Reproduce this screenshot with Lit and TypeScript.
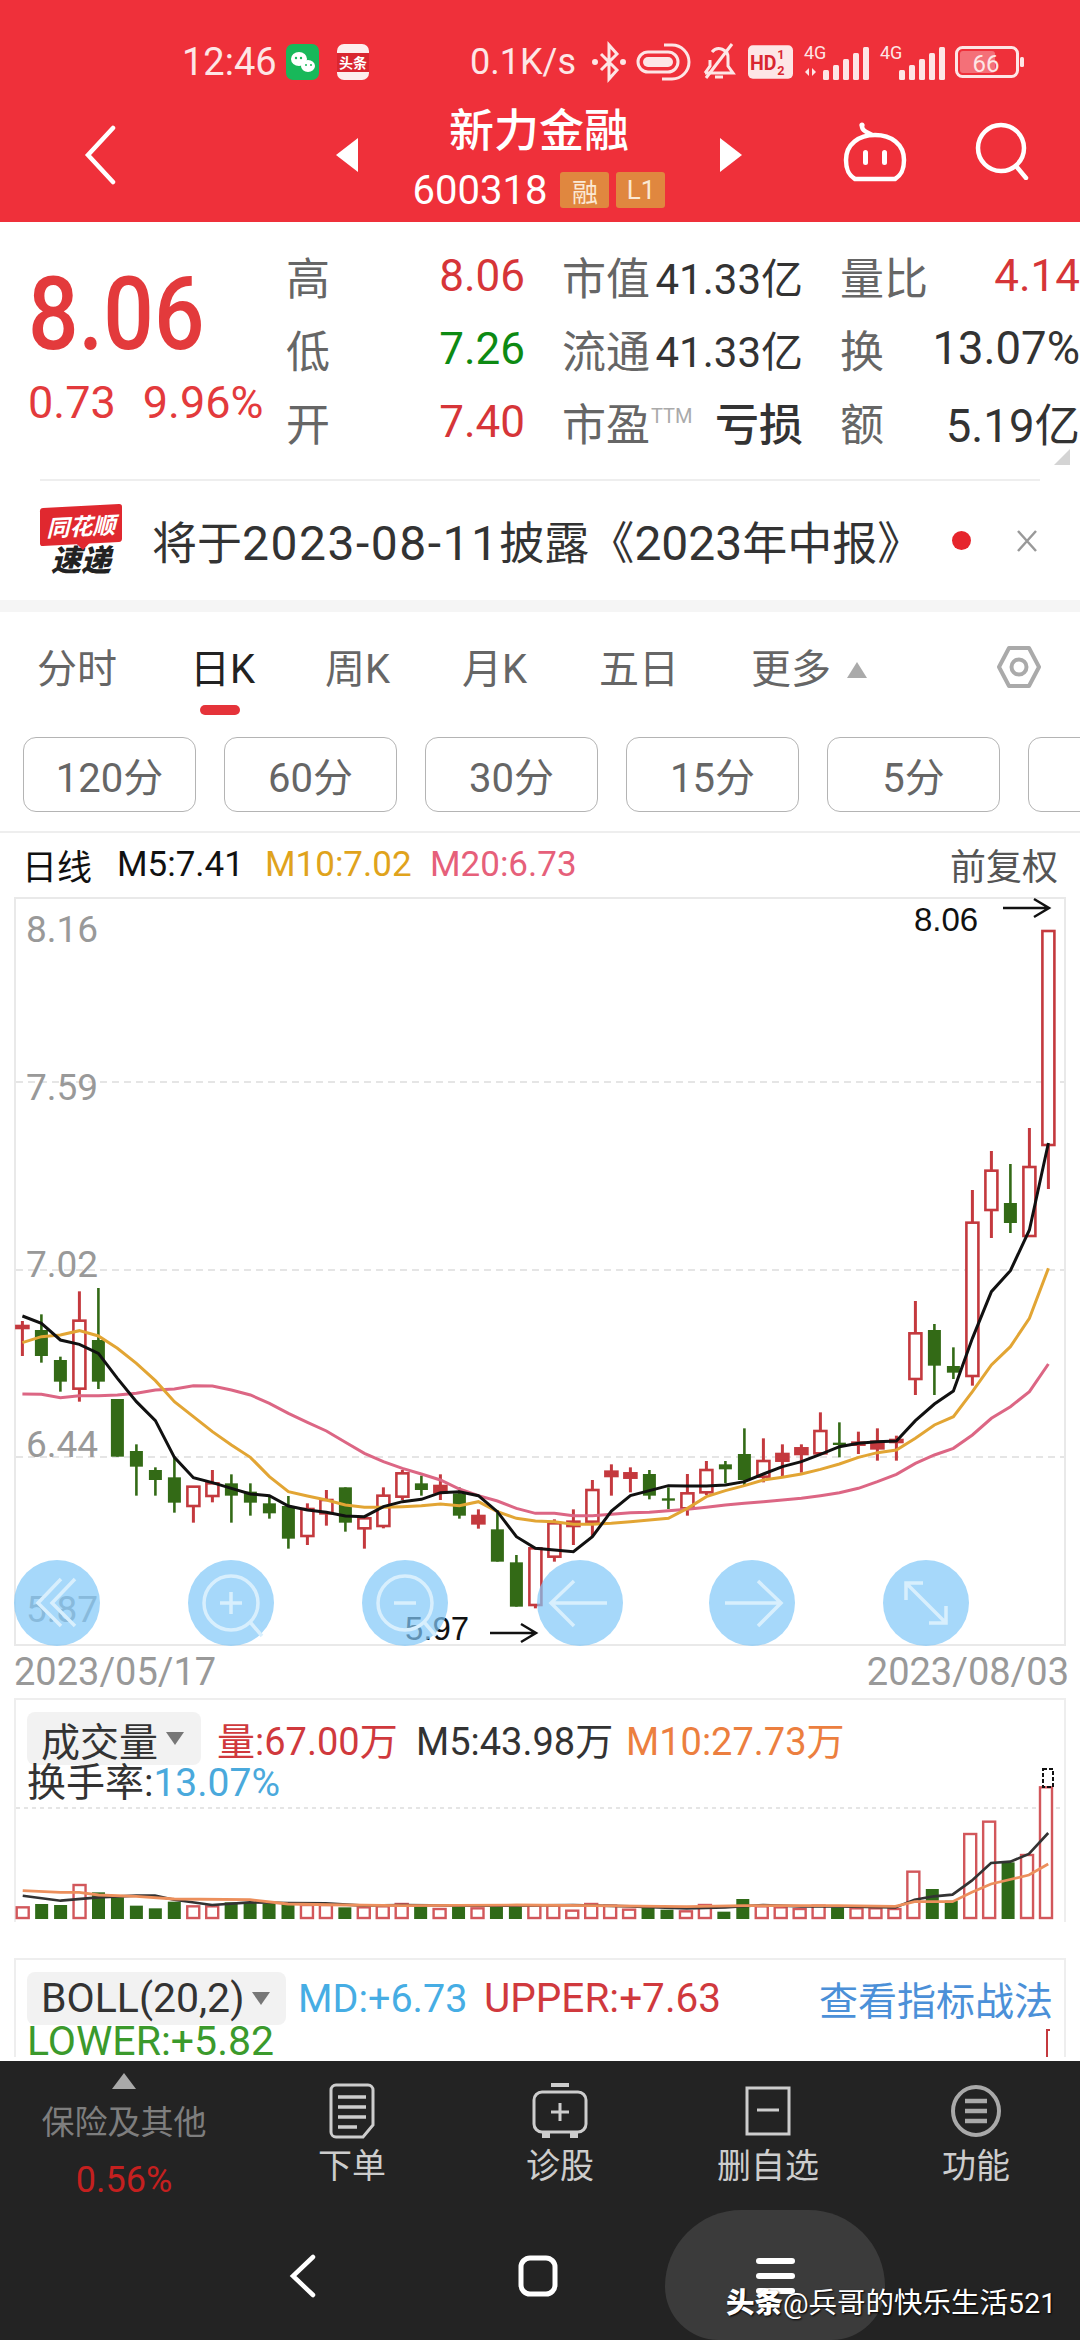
import { LitElement, html, css, svg } from "lit";
import { customElement } from "lit/decorators.js";

// candle data: [isRed, wickTop, bodyTop, bodyBottom, wickBottom], y as measured on the chart crop
const CANDLES: number[][] = [
  [1, 213, 228, 234, 318], [0, 193, 240, 318, 338], [0, 320, 330, 395, 425], [1, 124, 212, 416, 455],
  [0, 114, 270, 395, 417], [0, 447, 447, 620, 620], [0, 583, 603, 650, 737], [0, 652, 660, 690, 737],
  [0, 620, 682, 758, 788], [1, 710, 710, 768, 818], [1, 660, 700, 738, 757], [0, 673, 700, 737, 818],
  [0, 700, 725, 758, 797], [0, 740, 760, 790, 806], [0, 738, 768, 866, 896], [1, 760, 777, 858, 885],
  [1, 720, 750, 790, 827], [0, 712, 712, 818, 845], [1, 805, 805, 835, 896], [1, 712, 737, 828, 835],
  [1, 660, 670, 740, 750], [0, 677, 700, 720, 737], [1, 673, 708, 727, 750], [0, 712, 730, 797, 806],
  [1, 778, 798, 820, 836], [0, 780, 838, 935, 935], [0, 915, 937, 1070, 1070], [1, 895, 895, 1065, 1075],
  [1, 808, 820, 920, 935], [1, 778, 815, 828, 885], [1, 690, 720, 815, 860], [1, 643, 665, 678, 737],
  [1, 652, 670, 683, 727], [0, 660, 672, 737, 748], [0, 712, 745, 752, 777], [1, 672, 730, 775, 797],
  [1, 633, 660, 727, 735], [0, 633, 643, 658, 700], [0, 535, 612, 690, 705], [1, 565, 633, 680, 697],
  [1, 583, 612, 632, 678], [1, 583, 595, 612, 668], [1, 487, 543, 610, 615], [0, 517, 578, 585, 622],
  [1, 545, 578, 582, 612], [1, 535, 575, 595, 632], [1, 557, 570, 575, 632], [1, 153, 250, 387, 435],
  [0, 222, 240, 347, 435], [0, 292, 348, 368, 387], [1, -180, -82, 378, 407], [1, -297, -238, -120, -36],
  [0, -258, -141, -81, -51], [1, -366, -249, -42, -42], [1, -957, -957, -315, -183],
];
const MA5 = [198, 220, 270, 283, 310, 385, 455, 512, 622, 683, 698, 715, 732, 737, 768, 780, 787, 798, 800, 770, 755, 748, 728, 725, 737, 785, 860, 895, 900, 905, 860, 783, 737, 722, 707, 708, 708, 705, 695, 672, 650, 635, 613, 590, 580, 575, 573, 512, 462, 423, 265, 125, 62, -60, -321];
const MA10 = [278, 260, 255, 242, 258, 295, 340, 392, 455, 500, 545, 585, 622, 680, 725, 738, 750, 765, 772, 772, 770, 767, 762, 767, 755, 785, 805, 813, 815, 823, 823, 820, 815, 810, 805, 775, 740, 722, 707, 690, 682, 672, 658, 642, 622, 608, 600, 565, 525, 500, 425, 345, 290, 205, 55];
const MA20 = [432, 433, 443, 437, 437, 435, 430, 420, 417, 407, 408, 420, 435, 460, 490, 517, 543, 577, 610, 635, 655, 672, 690, 717, 737, 753, 775, 790, 790, 797, 797, 793, 788, 787, 782, 778, 772, 765, 760, 755, 750, 745, 737, 728, 715, 695, 673, 640, 615, 595, 555, 505, 470, 425, 342];

// volume: [isRed, top]
const VOLS: number[][] = [
  [1, 745], [0, 735], [0, 738], [1, 678], [0, 700], [0, 715], [0, 740], [0, 748], [0, 728], [1, 742], [1, 742],
  [0, 730], [0, 730], [0, 735], [0, 735], [1, 738], [1, 738], [0, 745], [1, 745], [1, 742], [1, 735], [0, 738],
  [1, 750], [0, 742], [1, 748], [0, 742], [0, 742], [1, 740], [1, 740], [1, 755], [1, 735], [1, 740], [1, 752],
  [0, 745], [0, 752], [1, 757], [1, 738], [0, 758], [0, 720], [1, 742], [1, 745], [1, 750], [1, 740], [0, 745],
  [1, 748], [1, 748], [1, 750], [1, 638], [0, 690], [0, 725], [1, 525], [1, 488], [0, 610], [1, 588], [1, 385],
];
const VOL_MA5 = [[33, 710], [88, 725], [143, 715], [198, 710], [225, 710], [253, 722], [308, 738], [363, 730], [418, 732], [473, 733], [528, 740], [584, 738], [667, 740], [750, 740], [832, 738], [915, 742], [997, 748], [1053, 745], [1108, 738], [1163, 742], [1218, 742], [1300, 745], [1328, 722], [1356, 712], [1383, 707], [1411, 665], [1439, 612], [1467, 608], [1494, 585], [1522, 522]];
const VOL_MA10 = [[33, 695], [88, 700], [115, 700], [143, 708], [198, 712], [253, 720], [363, 722], [418, 735], [501, 738], [584, 740], [750, 738], [860, 740], [997, 743], [1080, 740], [1218, 740], [1300, 742], [1328, 728], [1383, 728], [1411, 700], [1439, 675], [1494, 648], [1522, 615]];

const candleX = (i: number) => 22.4 + i * 19;
const py = (v: number) => 1250 + v / 3;
const maPoints = (a: number[]) => a.map((v, i) => `${candleX(i)},${py(v)}`).join(" ");
const volY = (v: number) => 1660 + v / 3;
const volPoints = (a: number[][]) => a.map(([x, y]) => `${x / 1.452},${volY(y)}`).join(" ");

const RED = "#c4393e";
const GREEN = "#336a16";

@customElement("app-root")
export class AppRoot extends LitElement {
  static styles = css`
    :host {
      display: block;
      width: 1080px;
      height: 2340px;
      overflow: hidden;
      background: #fff;
      position: relative;
      font-family: Roboto, "Noto Sans CJK SC", sans-serif;
    }
    .page { display: flex; flex-direction: column; height: 2340px; }

    .header { height: 222px; background: #ef303a; color: #fff; flex: none; }
    .status { display: flex; align-items: center; justify-content: space-between; height: 60px; padding: 32px 55px 0 182px; color: #fde6e6; }
    .status-left, .status-right { display: flex; align-items: center; }
    .time { font-size: 38px; margin-right: 9px; }
    .speed { font-size: 36px; margin-right: 6px; }
    .status svg { display: block; flex: none; overflow: visible; }
    .status-left svg + svg { margin-left: 18px; }
    .status-right svg { margin-left: 10px; }
    .nav { display: grid; grid-template-columns: 336px 406px 1fr; height: 130px; }
    .back { padding: 33px 0 0 84px; }
    .mid { display: flex; justify-content: space-between; align-items: flex-start; padding-top: 46px; }
    .mid-text { display: flex; flex-direction: column; align-items: center; margin-top: -36px; }
    .title { font-size: 45px; font-weight: 500; line-height: 60px; }
    .sub { display: flex; align-items: center; height: 46px; margin-top: 5px; font-size: 40px; gap: 7px; }
    .code { margin-right: 6px; }
    .tag { width: 49px; height: 36px; background: #e0873f; color: #fbe9d4; border-radius: 3px; font-size: 26px; display: flex; align-items: center; justify-content: center; }
    .nav-right { display: flex; gap: 68px; padding: 30px 0 0 101px; align-items: flex-start; }

    .quote { height: 257px; display: flex; flex: none; padding-top: 17px; box-sizing: border-box; position: relative; }
    .price { width: 286px; flex: none; padding: 27px 0 0 28px; box-sizing: border-box; color: #e33a3c; }
    .price-main { font-size: 89px; line-height: 84px; font-weight: 500; transform: scaleY(1.15); transform-origin: top left; }
    .price-sub { font-size: 45px; line-height: 50px; margin-top: 28px; display: flex; gap: 27px; white-space: nowrap; }
    .stats { display: grid; grid-template-columns: 239px 241px 240px; grid-auto-rows: 73px; column-gap: 37px; align-items: center; }
    .cell { display: flex; justify-content: space-between; align-items: center; white-space: nowrap; }
    .lab { font-size: 44px; color: #666; }
    .val { font-size: 42px; color: #333; }
    .val.big { font-size: 45.5px; }
    .val.up { color: #d63538; font-size: 44px; }
    .val.down { color: #0d8a13; font-size: 44px; }
    .lab sup { font-size: 20px; color: #aaa; vertical-align: 18px; line-height: 0; margin-left: 1px; }
    .loss { font-size: 44px; color: #333; font-weight: 500; }
    .corner { position: absolute; right: 10px; bottom: 14px; width: 0; height: 0; border-left: 16px solid transparent; border-bottom: 16px solid #d4d4d4; }

    .notice-line { height: 2px; margin: 0 40px; background: #eee; flex: none; }
    .notice { height: 119px; display: flex; align-items: center; flex: none; padding-left: 40px; }
    .logo { width: 82px; flex: none; margin-right: 30px; }
    .logo-top { background: #e0282f; color: #fff; height: 38px; font-size: 23px; font-style: italic; font-weight: 700; display: flex; align-items: center; justify-content: center; border-radius: 3px; transform: skewY(-3deg); white-space: nowrap; position: relative; }
    .logo-top::after { content: ""; position: absolute; left: 36px; bottom: -6px; width: 0; height: 0; border-left: 7px solid transparent; border-right: 7px solid transparent; border-top: 7px solid #e0282f; }
    .logo-bottom { color: #222; font-size: 30px; line-height: 30px; font-weight: 900; font-style: italic; text-align: center; margin-top: 2px; }
    .notice-text { font-size: 45px; color: #333; white-space: nowrap; width: 800px; flex: none; }
    .notice-text span { font-size: 48px; }
    .notice-text .date { letter-spacing: 1.5px; }
    .dot { width: 19px; height: 19px; border-radius: 50%; background: #e6252c; flex: none; }
    .close { margin-left: 45px; flex: none; display: block; }
    .band { height: 12px; background: #f5f5f5; flex: none; }

    .tabs { height: 125px; position: relative; flex: none; display: flex; align-items: flex-start; padding: 33px 0 0 37px; font-size: 40px; color: #666; box-sizing: border-box; }
    .tab { width: 137px; flex: none; line-height: 50px; white-space: nowrap; }
    .tab.first { width: 153px; }
    .tab.wide { width: 152px; }
    .tab.active { color: #222; position: relative; width: 135px; }
    .tab.active::after { content: ""; position: absolute; left: 10px; top: 60px; width: 40px; height: 10px; border-radius: 5px; background: #e5333a; }
    .tab.more { display: flex; align-items: center; gap: 16px; width: 246px; }
    .more i { width: 0; height: 0; border-left: 10px solid transparent; border-right: 10px solid transparent; border-bottom: 16px solid #aaa; }
    .pills { display: flex; gap: 28px; padding-left: 23px; height: 75px; flex: none; overflow: hidden; }
    .pill { width: 173px; flex: none; box-sizing: border-box; border: 1.5px solid #b4b4b4; border-radius: 13px; font-size: 40px; color: #666; display: flex; align-items: center; justify-content: center; }
    .pills-line { height: 2px; background: #eee; margin-top: 19px; flex: none; }
    .legend { height: 62px; display: flex; align-items: center; flex: none; font-size: 35px; padding: 0 22px 2px 22px; white-space: nowrap; color: #111; }
    .legend .l1 { width: 95px; }
    .legend .l2 { width: 148px; }
    .legend .l3 { width: 165px; color: #e0a31c; }
    .legend .l4 { color: #e6607a; }
    .legend .l5 { margin-left: auto; color: #555; font-size: 36px; }

    .chart { position: relative; margin-left: 14px; width: 1052px; height: 749px; flex: none; box-sizing: border-box; border: 2px solid #e9e9e9; }
    .chart svg { position: absolute; left: -2px; top: -2px; display: block; overflow: visible; }
    .fab { position: absolute; top: 661px; width: 86px; height: 86px; border-radius: 50%; background: rgba(128, 200, 248, 0.7); }
    .fab svg { left: 0; top: 0; }
    .dates { height: 52px; display: flex; justify-content: space-between; align-items: center; padding: 0 11px 0 14px; font-size: 38px; color: #999; flex: none; }

    .panel { margin-left: 14px; width: 1052px; box-sizing: border-box; border: 2px solid #eee; border-bottom: none; flex: none; position: relative; }
    .vol { height: 224px; }
    .vol svg { position: absolute; left: -2px; top: -2px; display: block; }
    .row { display: flex; align-items: center; white-space: nowrap; font-size: 38px; position: relative; }
    .select { background: #f2f2f2; border-radius: 8px; height: 53px; display: flex; align-items: center; color: #333; font-size: 39px; padding-left: 14px; box-sizing: border-box; flex: none; }
    .select i { width: 0; height: 0; border-left: 9px solid transparent; border-right: 9px solid transparent; border-top: 13px solid #777; margin-left: 8px; }
    .vol-row { padding: 11px 0 0 11px; }
    .select.s1 { width: 174px; }
    .select.s2 { width: 259px; font-size: 41px; }
    .red { color: #d0393d; }
    .dark { color: #333; }
    .orange { color: #ec7f3f; }
    .v1 { margin-left: 16px; width: 199px; }
    .v2 { width: 210px; }
    .turn { padding-left: 11px; font-size: 39px; line-height: 34px; color: #333; position: relative; }
    .turn span { color: #4aa9dc; }
    .gap { height: 36px; flex: none; }
    .boll { height: 99px; }
    .boll-row { padding: 10px 0 0 11px; }
    .md { color: #46ade4; margin-left: 12px; width: 186px; font-size: 39.5px; }
    .up-band { color: #d0393d; font-size: 40.5px; }
    .link { margin-left: auto; margin-right: 11px; color: #4b90d8; font-size: 39px; }
    .lower { padding-left: 11px; font-size: 41px; line-height: 30px; color: #3b9a2c; }
    .tick { position: absolute; right: 14px; bottom: 0; width: 4px; height: 28px; border-left: 2px solid #c4393e; border-top: 2px solid #c4393e; box-sizing: border-box; }

    .bottom { position: absolute; left: 0; top: 2061px; width: 1080px; height: 279px; background: #232323; }
    .actions { display: grid; grid-template-columns: 248px repeat(4, 208px); height: 145px; }
    .ins { display: flex; flex-direction: column; align-items: center; padding-top: 12px; }
    .ins i { width: 0; height: 0; border-left: 12px solid transparent; border-right: 12px solid transparent; border-bottom: 16px solid #a9a9a9; }
    .ins-name { font-size: 33px; color: #7e7e7e; line-height: 44px; margin-top: 12px; }
    .ins-val { font-size: 36px; color: #c4201f; line-height: 40px; margin-top: 15px; }
    .act { display: flex; flex-direction: column; align-items: center; color: #cdcdcd; font-size: 34px; padding-top: 22px; }
    .act svg { display: block; height: 56px; }
    .act span { line-height: 44px; margin-top: 5px; }
    .sysnav { position: relative; height: 134px; }
    .sysnav svg { position: absolute; display: block; }
    .sn-back { left: 288px; top: 48px; }
    .sn-home { left: 518px; top: 49px; }
    .sn-menu { left: 755px; top: 50px; }
    .pill-bg { position: absolute; left: 665px; top: 4px; width: 220px; height: 130px; background: #3b3b3b; border-radius: 100px 100px 70px 70px; }
    .mark { position: absolute; left: 726px; top: 74px; font-size: 28.5px; color: #fff; white-space: nowrap; text-shadow: 1px 1px 2px #000; }
    .mark b { font-weight: 900; }
  `;

  private statusBar() {
    return html`
      <div class="status">
        <div class="status-left">
          <span class="time">12:46</span>
          <svg width="33" height="36" viewBox="0 0 33 36"><rect width="33" height="36" rx="7" fill="#18b85a"/><ellipse cx="13" cy="15" rx="8" ry="7" fill="#fff"/><ellipse cx="22" cy="22" rx="7" ry="6" fill="#fff"/><circle cx="10" cy="14" r="1.2" fill="#18b85a"/><circle cx="15" cy="14" r="1.2" fill="#18b85a"/><circle cx="20" cy="21" r="1" fill="#18b85a"/><circle cx="25" cy="21" r="1" fill="#18b85a"/></svg>
          <svg width="32" height="36" viewBox="0 0 32 36"><rect width="32" height="36" rx="7" fill="#fdeeee"/><rect y="9" width="32" height="19" fill="#d92630"/><text x="16" y="24" text-anchor="middle" font-size="14" font-weight="700" fill="#fff">头条</text></svg>
        </div>
        <div class="status-right">
          <span class="speed">0.1K/s</span>
          <svg width="34" height="40" viewBox="0 0 34 40" fill="none" stroke="#fde6e6" stroke-width="3"><path d="M9 12 L25 28 L17 37 V3 L25 12 L9 28"/><circle cx="3" cy="20" r="1.5" fill="#fde6e6"/><circle cx="31" cy="20" r="1.5" fill="#fde6e6"/></svg>
          <svg width="54" height="38" viewBox="0 0 54 38" fill="none" stroke="#fde6e6" stroke-width="3"><rect x="2" y="9" width="40" height="20" rx="10"/><rect x="7" y="14" width="30" height="10" rx="5" fill="#fde6e6" stroke="none"/><path d="M28 2 H36 A17 17 0 0 1 36 36 H26"/></svg>
          <svg width="38" height="40" viewBox="0 0 38 40" fill="none" stroke="#fde6e6" stroke-width="3"><path d="M5 31 H33 L28 24 V16 A9 9 0 0 0 12 10 M10 18 V24 L5 31"/><path d="M15 35 H23"/><path d="M6 36 L32 2"/></svg>
          <svg width="45" height="34" viewBox="0 0 46 34"><rect width="46" height="34" rx="5" fill="#fde6e6"/><text x="2" y="25" font-size="20" font-weight="700" fill="#d92630">HD</text><text x="30" y="14" font-size="13" font-weight="700" fill="#d92630">1</text><text x="30" y="30" font-size="13" font-weight="700" fill="#d92630">2</text></svg>
          ${this.signal(true)}
          ${this.signal(false)}
          <svg width="70" height="32" viewBox="0 0 70 32"><rect x="1.5" y="1.5" width="61" height="29" rx="6" fill="none" stroke="#fde6e6" stroke-width="3"/><rect x="5" y="5" width="35" height="22" rx="3" fill="#f47078"/><rect x="65" y="11" width="4" height="10" rx="1.5" fill="#fde6e6"/><text x="31" y="26" text-anchor="middle" font-size="24" fill="#fde6e6">66</text></svg>
        </div>
      </div>
    `;
  }

  private signal(arrows: boolean) {
    const bars = [10, 15, 21, 27, 33];
    return html`<svg width="66" height="40" viewBox="0 0 66 40">
      <text x="1" y="17" font-size="18" fill="#fde6e6">4G</text>
      ${arrows ? svg`<path d="M2 30 l4 -4 v8 z M9 26 l4 4 -4 4 z" fill="#fde6e6"/>` : ""}
      ${bars.map((h, i) => svg`<rect x=${20 + i * 10} y=${38 - h} width="6" height=${h} rx="1.5" fill="#fde6e6"/>`)}
    </svg>`;
  }

  private navBar() {
    return html`
      <div class="nav">
        <div class="back">
          <svg width="32" height="60" viewBox="0 0 32 60" fill="none" stroke="#fff" stroke-width="4.5" stroke-linecap="round"><path d="M29 3 L4 30 L29 57"/></svg>
        </div>
        <div class="mid">
          <svg width="22" height="34" viewBox="0 0 22 34"><path d="M22 0 V34 L0 17 z" fill="#fff"/></svg>
          <div class="mid-text">
            <div class="title">新力金融</div>
            <div class="sub"><span class="code">600318</span><span class="tag">融</span><span class="tag">L1</span></div>
          </div>
          <svg width="22" height="34" viewBox="0 0 22 34"><path d="M0 0 V34 L22 17 z" fill="#fff"/></svg>
        </div>
        <div class="nav-right">
          <svg width="64" height="60" viewBox="0 0 64 60" fill="none" stroke="#fff" stroke-width="4.5"><path d="M19 2 C18 9 24 10 29 13"/><circle cx="19" cy="3" r="2.5" fill="#fff" stroke="none"/><path d="M12 57 C4 52 3 45 3 38 C3 22 16 13 32 13 C48 13 61 22 61 38 C61 45 60 52 52 57 Z" stroke-linejoin="round"/><rect x="20" y="28" width="5" height="15" rx="2.5" fill="#fff" stroke="none"/><rect x="39" y="28" width="5" height="15" rx="2.5" fill="#fff" stroke="none"/></svg>
          <svg width="54" height="58" viewBox="0 0 54 58" fill="none" stroke="#fff" stroke-width="4.5" stroke-linecap="round"><circle cx="26" cy="26" r="23"/><path d="M41 44 L51 56"/></svg>
        </div>
      </div>
    `;
  }

  private quote() {
    return html`
      <div class="quote">
        <div class="price">
          <div class="price-main">8.06</div>
          <div class="price-sub"><span>0.73</span><span>9.96%</span></div>
        </div>
        <div class="stats">
          <div class="cell"><span class="lab">高</span><span class="val up">8.06</span></div>
          <div class="cell"><span class="lab">市值</span><span class="val">41.33亿</span></div>
          <div class="cell"><span class="lab">量比</span><span class="val up">4.14</span></div>
          <div class="cell"><span class="lab">低</span><span class="val down">7.26</span></div>
          <div class="cell"><span class="lab">流通</span><span class="val">41.33亿</span></div>
          <div class="cell"><span class="lab">换</span><span class="val big">13.07%</span></div>
          <div class="cell"><span class="lab">开</span><span class="val up">7.40</span></div>
          <div class="cell"><span class="lab">市盈<sup>TTM</sup></span><span class="loss">亏损</span></div>
          <div class="cell"><span class="lab">额</span><span class="val big">5.19亿</span></div>
        </div>
        <div class="corner"></div>
      </div>
    `;
  }

  private notice() {
    return html`
      <div class="notice-line"></div>
      <div class="notice">
        <div class="logo">
          <div class="logo-top">同花顺</div>
          <div class="logo-bottom">速递</div>
        </div>
        <div class="notice-text">将于<span class="date">2023-08-11</span>披露《<span>2023</span>年中报》</div>
        <div class="dot"></div>
        <svg class="close" width="22" height="24" viewBox="0 0 22 24" fill="none" stroke="#999" stroke-width="2.5"><path d="M2 2 L20 22 M20 2 L2 22"/></svg>
      </div>
      <div class="band"></div>
    `;
  }

  private tabs() {
    return html`
      <div class="tabs">
        <div class="tab first">分时</div>
        <div class="tab active">日K</div>
        <div class="tab">周K</div>
        <div class="tab">月K</div>
        <div class="tab wide">五日</div>
        <div class="tab more">更多<i></i></div>
        <svg width="44" height="44" viewBox="0 0 44 44" fill="none" stroke="#aaa" stroke-width="4"><path d="M12 3 H32 L42 22 L32 41 H12 L2 22 Z" stroke-linejoin="round"/><circle cx="22" cy="22" r="7.5"/></svg>
      </div>
      <div class="pills">
        ${["120分", "60分", "30分", "15分", "5分", ""].map((t) => html`<div class="pill">${t}</div>`)}
      </div>
      <div class="pills-line"></div>
      <div class="legend">
        <span class="l1">日线</span><span class="l2">M5:7.41</span><span class="l3">M10:7.02</span><span class="l4">M20:6.73</span><span class="l5">前复权</span>
      </div>
    `;
  }

  private candle(c: number[], i: number) {
    const [red, wt, bt, bb, wb] = c;
    const x = candleX(i);
    const color = red ? RED : GREEN;
    const top = py(bt);
    const bottom = py(bb);
    if (red) {
      const solid = bottom - top < 8;
      return svg`
        <line x1=${x} x2=${x} y1=${py(wt)} y2=${py(wb)} stroke=${color} stroke-width="3"/>
        <rect x=${x - 6} y=${top} width="12" height=${Math.max(bottom - top, 2)} fill=${solid ? color : "#fff"} stroke=${color} stroke-width="2.6"/>
      `;
    }
    return svg`
      <line x1=${x} x2=${x} y1=${py(wt)} y2=${py(wb)} stroke=${color} stroke-width="2.6"/>
      <rect x=${x - 6.5} y=${top} width="13" height=${Math.max(bottom - top, 2)} fill=${color}/>
    `;
  }

  private mainChart() {
    const labels = [["8.16", 942], ["7.59", 1100], ["7.02", 1277], ["6.44", 1457], ["5.87", 1622]];
    const fabs = [43, 217, 391, 566, 738, 912];
    return html`
      <div class="chart">
        <svg width="1052" height="749" viewBox="14 897 1052 749" font-family="Roboto, sans-serif">
          <line x1="16" x2="1064" y1="1082" y2="1082" stroke="#ddd" stroke-width="1.5" stroke-dasharray="7 5"/>
          <line x1="16" x2="1064" y1="1270" y2="1270" stroke="#ddd" stroke-width="1.5" stroke-dasharray="7 5"/>
          <line x1="16" x2="1064" y1="1457" y2="1457" stroke="#ddd" stroke-width="1.5" stroke-dasharray="7 5"/>
          ${labels.map(([t, y]) => svg`<text x="26" y=${y} font-size="37" fill="#999">${t}</text>`)}
          ${CANDLES.map((c, i) => this.candle(c, i))}
          <polyline points=${maPoints(MA20)} fill="none" stroke="#dc6684" stroke-width="3"/>
          <polyline points=${maPoints(MA10)} fill="none" stroke="#e2a534" stroke-width="3"/>
          <polyline points=${maPoints(MA5)} fill="none" stroke="#111" stroke-width="3"/>
          <text x="914" y="931" font-family="Liberation Sans" font-size="33" fill="#111">8.06</text>
          <path d="M1003 908 H1048 M1034 899 L1049 908 L1034 917" fill="none" stroke="#111" stroke-width="2.5"/>
          <text x="405" y="1640" font-family="Liberation Sans" font-size="33" fill="#111">5.97</text>
          <path d="M490 1633 H535 M521 1624 L536 1633 L521 1642" fill="none" stroke="#111" stroke-width="2.5"/>
        </svg>
        ${fabs.map((x, i) => html`<div class="fab" style="left:${x - 43 - 2}px">${this.fabIcon(i)}</div>`)}
      </div>
      <div class="dates"><span>2023/05/17</span><span>2023/08/03</span></div>
    `;
  }

  private fabIcon(i: number) {
    const paths = [
      svg`<path d="M47 19 L24 43 L47 66 M61 19 L38 43 L61 66"/>`,
      svg`<circle cx="43" cy="43" r="27"/><path d="M62 62 L74 76 M32 43 H54 M43 32 V54"/>`,
      svg`<circle cx="43" cy="43" r="27"/><path d="M62 62 L74 76 M32 43 H54"/>`,
      svg`<path d="M16 43 H70 M37 21 L14 43 L37 66"/>`,
      svg`<path d="M16 43 H70 M49 21 L72 43 L49 66"/>`,
      svg`<path d="M24 24 L62 62 M23 40 V23 H40 M63 46 V63 H46"/>`,
    ];
    return html`<svg width="86" height="86" viewBox="0 0 86 86" fill="none" stroke="#d8effd" stroke-width="3.5">${paths[i]}</svg>`;
  }

  private volumePanel() {
    return html`
      <div class="panel vol">
        <svg width="1052" height="224" viewBox="14 1699 1052 224">
          <line x1="16" x2="1064" y1="1809" y2="1809" stroke="#ddd" stroke-width="1.5" stroke-dasharray="4 4"/>
          ${VOLS.map(([red, top], i) => {
            const x = 22.7 + i * 18.95;
            const y = volY(top);
            return red
              ? svg`<rect x=${x - 6} y=${y} width="12" height=${1919 - y} fill="#fff" stroke="#d2575b" stroke-width="2.4"/>`
              : svg`<rect x=${x - 6.5} y=${y} width="13" height=${1920 - y} fill="#2f6a18"/>`;
          })}
          <polyline points=${volPoints(VOL_MA5)} fill="none" stroke="#333" stroke-width="2.6"/>
          <polyline points=${volPoints(VOL_MA10)} fill="none" stroke="#ec8f5c" stroke-width="2.8"/>
          <rect x="1043" y="1770" width="10" height="18" fill="none" stroke="#111" stroke-width="2" stroke-dasharray="4 2"/>
        </svg>
        <div class="row vol-row">
          <div class="select s1">成交量<i></i></div>
          <span class="red v1">量:67.00万</span>
          <span class="dark v2">M5:43.98万</span>
          <span class="orange">M10:27.73万</span>
        </div>
        <div class="turn">换手率:<span>13.07%</span></div>
      </div>
    `;
  }

  private bollPanel() {
    return html`
      <div class="gap"></div>
      <div class="panel boll">
        <div class="row boll-row">
          <div class="select s2">BOLL(20,2)<i></i></div>
          <span class="md">MD:+6.73</span>
          <span class="up-band">UPPER:+7.63</span>
          <span class="link">查看指标战法</span>
        </div>
        <div class="lower">LOWER:+5.82</div>
        <div class="tick"></div>
      </div>
    `;
  }

  private bottomBar() {
    return html`
      <div class="bottom">
        <div class="actions">
          <div class="ins">
            <i></i>
            <div class="ins-name">保险及其他</div>
            <div class="ins-val">0.56%</div>
          </div>
          <div class="act">
            <svg width="46" height="56" viewBox="0 0 46 56" fill="none" stroke="#cdcdcd" stroke-width="3"><path d="M7 2 H39 A5 5 0 0 1 44 7 V42 L34 54 H7 A5 5 0 0 1 2 49 V7 A5 5 0 0 1 7 2 Z"/><path d="M9 14 H37 M9 24 H37 M9 34 H37 M9 44 H28" stroke-width="3.5"/></svg>
            <span>下单</span>
          </div>
          <div class="act">
            <svg width="56" height="56" viewBox="0 0 56 56" fill="none" stroke="#cdcdcd" stroke-width="3"><path d="M19 2 H37" stroke-width="4"/><rect x="2" y="9" width="52" height="40" rx="8"/><path d="M10 52 H18 M38 52 H46" stroke-width="6"/><path d="M28 20 V38 M19 29 H37"/></svg>
            <span>诊股</span>
          </div>
          <div class="act">
            <svg width="46" height="50" viewBox="0 0 46 50" fill="none" stroke="#cdcdcd" stroke-width="3"><rect x="2" y="2" width="42" height="46"/><path d="M12 24 H34"/></svg>
            <span>删自选</span>
          </div>
          <div class="act">
            <svg width="50" height="52" viewBox="0 0 50 52" fill="none" stroke="#a9a9a9" stroke-width="4"><ellipse cx="25" cy="26" rx="23" ry="24"/><path d="M14 16 H36 M14 26 H36 M14 36 H36" stroke-width="4.5"/></svg>
            <span>功能</span>
          </div>
        </div>
        <div class="sysnav">
          <div class="pill-bg"></div>
          <svg class="sn-back" width="30" height="44" viewBox="0 0 30 44" fill="none" stroke="#fff" stroke-width="4.5" stroke-linecap="round"><path d="M25 3 L5 22 L25 41"/></svg>
          <svg class="sn-home" width="40" height="42" viewBox="0 0 40 42" fill="none" stroke="#fff" stroke-width="5"><rect x="3" y="3" width="34" height="36" rx="9"/></svg>
          <svg class="sn-menu" width="42" height="40" viewBox="0 0 42 40" fill="#fff"><rect x="1" y="2" width="39" height="6" rx="3"/><rect x="1" y="17" width="39" height="6" rx="3"/><rect x="1" y="32" width="39" height="6" rx="3"/></svg>
          <div class="mark"><b>头条</b>@兵哥的快乐生活521</div>
        </div>
      </div>
    `;
  }

  render() {
    return html`
      <div class="page">
        <div class="header">
          ${this.statusBar()}
          ${this.navBar()}
        </div>
        ${this.quote()}
        ${this.notice()}
        ${this.tabs()}
        ${this.mainChart()}
        ${this.volumePanel()}
        ${this.bollPanel()}
      </div>
      ${this.bottomBar()}
    `;
  }
}
